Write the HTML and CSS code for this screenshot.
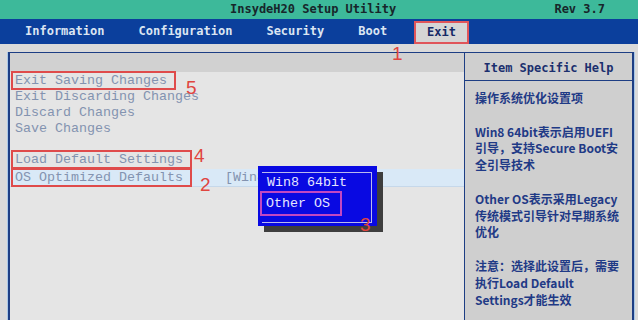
FILE: index.html
```html
<!DOCTYPE html>
<html lang="en">
<head>
    <meta charset="UTF-8">
    <title>InsydeH20 Setup Utility</title>
    <link rel="stylesheet" href="styles.css">
</head>
<body>
    <div class="titlebar">
        <span class="title">InsydeH20 Setup Utility</span>
        <span class="rev">Rev 3.7</span>
    </div>
    <div class="menubar">
        <span class="menu-item">Information</span>
        <span class="menu-item">Configuration</span>
        <span class="menu-item">Security</span>
        <span class="menu-item">Boot</span>
        <span class="menu-item active">Exit</span>
    </div>
    <div class="main">
        <div class="panel">
            <div class="left">
                <div class="strip"></div>
                <div class="options">
                    <div class="option"><span class="mark mark-5">Exit Saving Changes</span></div>
                    <div class="option">Exit Discarding Changes</div>
                    <div class="option">Discard Changes</div>
                    <div class="option">Save Changes</div>
                    <div class="option spaced"><span class="mark mark-4">Load Default Settings</span></div>
                    <div class="option selected">
                        <span class="label"><span class="mark mark-2">OS Optimized Defaults</span></span>
                        <span class="value">[Win8 64bit]</span>
                    </div>
                </div>
            </div>
            <div class="right">
                <div class="help-title">Item Specific Help</div>
                <div class="help">
                    <p>操作系统优化设置项</p>
                    <p>Win8 64bit表示启用UEFI<br>引导，支持Secure Boot安<br>全引导技术</p>
                    <p>Other OS表示采用Legacy<br>传统模式引导针对早期系统<br>优化</p>
                    <p>注意：选择此设置后，需要<br>执行Load Default<br>Settings才能生效</p>
                </div>
            </div>
        </div>
    </div>

    <!-- popup list for OS Optimized Defaults -->
    <div class="popup">
        <div class="popup-inner">
            <div class="popup-item">Win8 64bit</div>
            <div class="popup-item"><span class="mark-3">Other OS</span></div>
        </div>
    </div>

    <!-- red step numbers drawn over the screenshot -->
    <span class="num n1">1</span>
    <span class="num n2">2</span>
    <span class="num n3">3</span>
    <span class="num n4">4</span>
    <span class="num n5">5</span>
</body>
</html>
```

FILE: styles.css
```css
body {
    margin: 0;
    width: 638px;
    height: 320px;
    overflow: hidden;
    background-color: #dadada;
    position: relative;
    font-family: "DejaVu Sans Mono", monospace;
}
.titlebar {
    display: flex;
    height: 19px;
    line-height: 19px;
    background-color: #3db99a;
    color: #17262a;
    font-weight: bold;
    font-size: 12px;
}
.title {
    margin-left: 230px;
}
.rev {
    margin-left: auto;
    margin-right: 33px;
}
.menubar {
    display: flex;
    height: 25px;
    background-color: #0b3f9c;
    padding-left: 8px;
    font-size: 12px;
    font-weight: bold;
    color: #dbe5f2;
}
.menu-item {
    padding: 0 17px;
    line-height: 24px;
}
.menu-item.active {
    margin-left: 10px;
    margin-top: 2px;
    height: 19px;
    line-height: 19px;
    padding: 0 11px;
    background-color: #d5d5d5;
    color: #172a66;
    border: 2px solid #e0555a;
}
.main {
    padding: 8px 4px 0 8px;
}
.panel {
    display: flex;
    height: 280px;
    border-top: 1px solid #1d3e84;
    border-left: 2px solid #1d3e84;
    border-right: 2px solid #1d3e84;
    box-shadow: -1px 0 0 #a9c8e8, 1px 0 0 #a9c8e8;
}
.left {
    width: 454px;
    border-right: 1px solid #1d3e84;
    background-color: #e5e5e5;
}
.strip {
    height: 19px;
    background-color: #d1d1d1;
}
.options {
    padding-top: 1px;
    font-family: "Liberation Mono", monospace;
    font-size: 13.33px;
    color: #8393b0;
}
.option {
    height: 16px;
    line-height: 16px;
    padding-left: 5px;
    white-space: nowrap;
}
.option.spaced {
    margin-top: 15px;
}
.option.selected {
    display: flex;
    margin-top: 1px;
    height: 17px;
    line-height: 17px;
    background-color: #d9e9f7;
    border-bottom: 1px solid #c6d8ea;
}
.label {
    width: 210px;
}
.mark {
    padding: 0 7px 0 2px;
    margin-left: -2px;
    outline: 2px solid #df4b4b;
}
.right {
    flex: 1;
    background-color: #cfcfcf;
}
.help-title {
    height: 27px;
    line-height: 30px;
    text-align: center;
    font-size: 12px;
    font-weight: bold;
    color: #1b2f6e;
    border-bottom: 1px solid #1d3e84;
}
.help {
    padding: 9px 0 0 10px;
    font-family: "Noto Sans CJK SC", sans-serif;
    font-size: 12px;
    font-weight: bold;
    line-height: 16.8px;
    color: #1f3a86;
    white-space: nowrap;
}
.help p {
    margin: 0 0 16.8px;
}
.popup {
    position: absolute;
    left: 258px;
    top: 166px;
    width: 119px;
    height: 60px;
    padding: 6px 5px 5px 4px;
    box-sizing: border-box;
    background-color: #0909e2;
    box-shadow: 6px 6px 0 #3e3e3e;
}
.popup-inner {
    height: 100%;
    border: 1px solid #b9b9ee;
    border-left: none;
    font-family: "Liberation Mono", monospace;
    font-size: 13.33px;
    color: #e6e6ff;
}
.popup-item {
    height: 20px;
    line-height: 20px;
    padding-left: 5px;
}
.mark-3 {
    display: inline-block;
    margin-left: -5px;
    padding: 1px 10px 1px 4px;
    line-height: 19px;
    outline: 2px solid #c247c2;
}
.num {
    position: absolute;
    font-family: "Liberation Sans", sans-serif;
    font-size: 19px;
    line-height: 19px;
    color: #e0453f;
}
.n1 { left: 392px; top: 44px; }
.n2 { left: 200px; top: 175px; }
.n3 { left: 360px; top: 215px; }
.n4 { left: 194px; top: 146px; }
.n5 { left: 186px; top: 78px; }
```
